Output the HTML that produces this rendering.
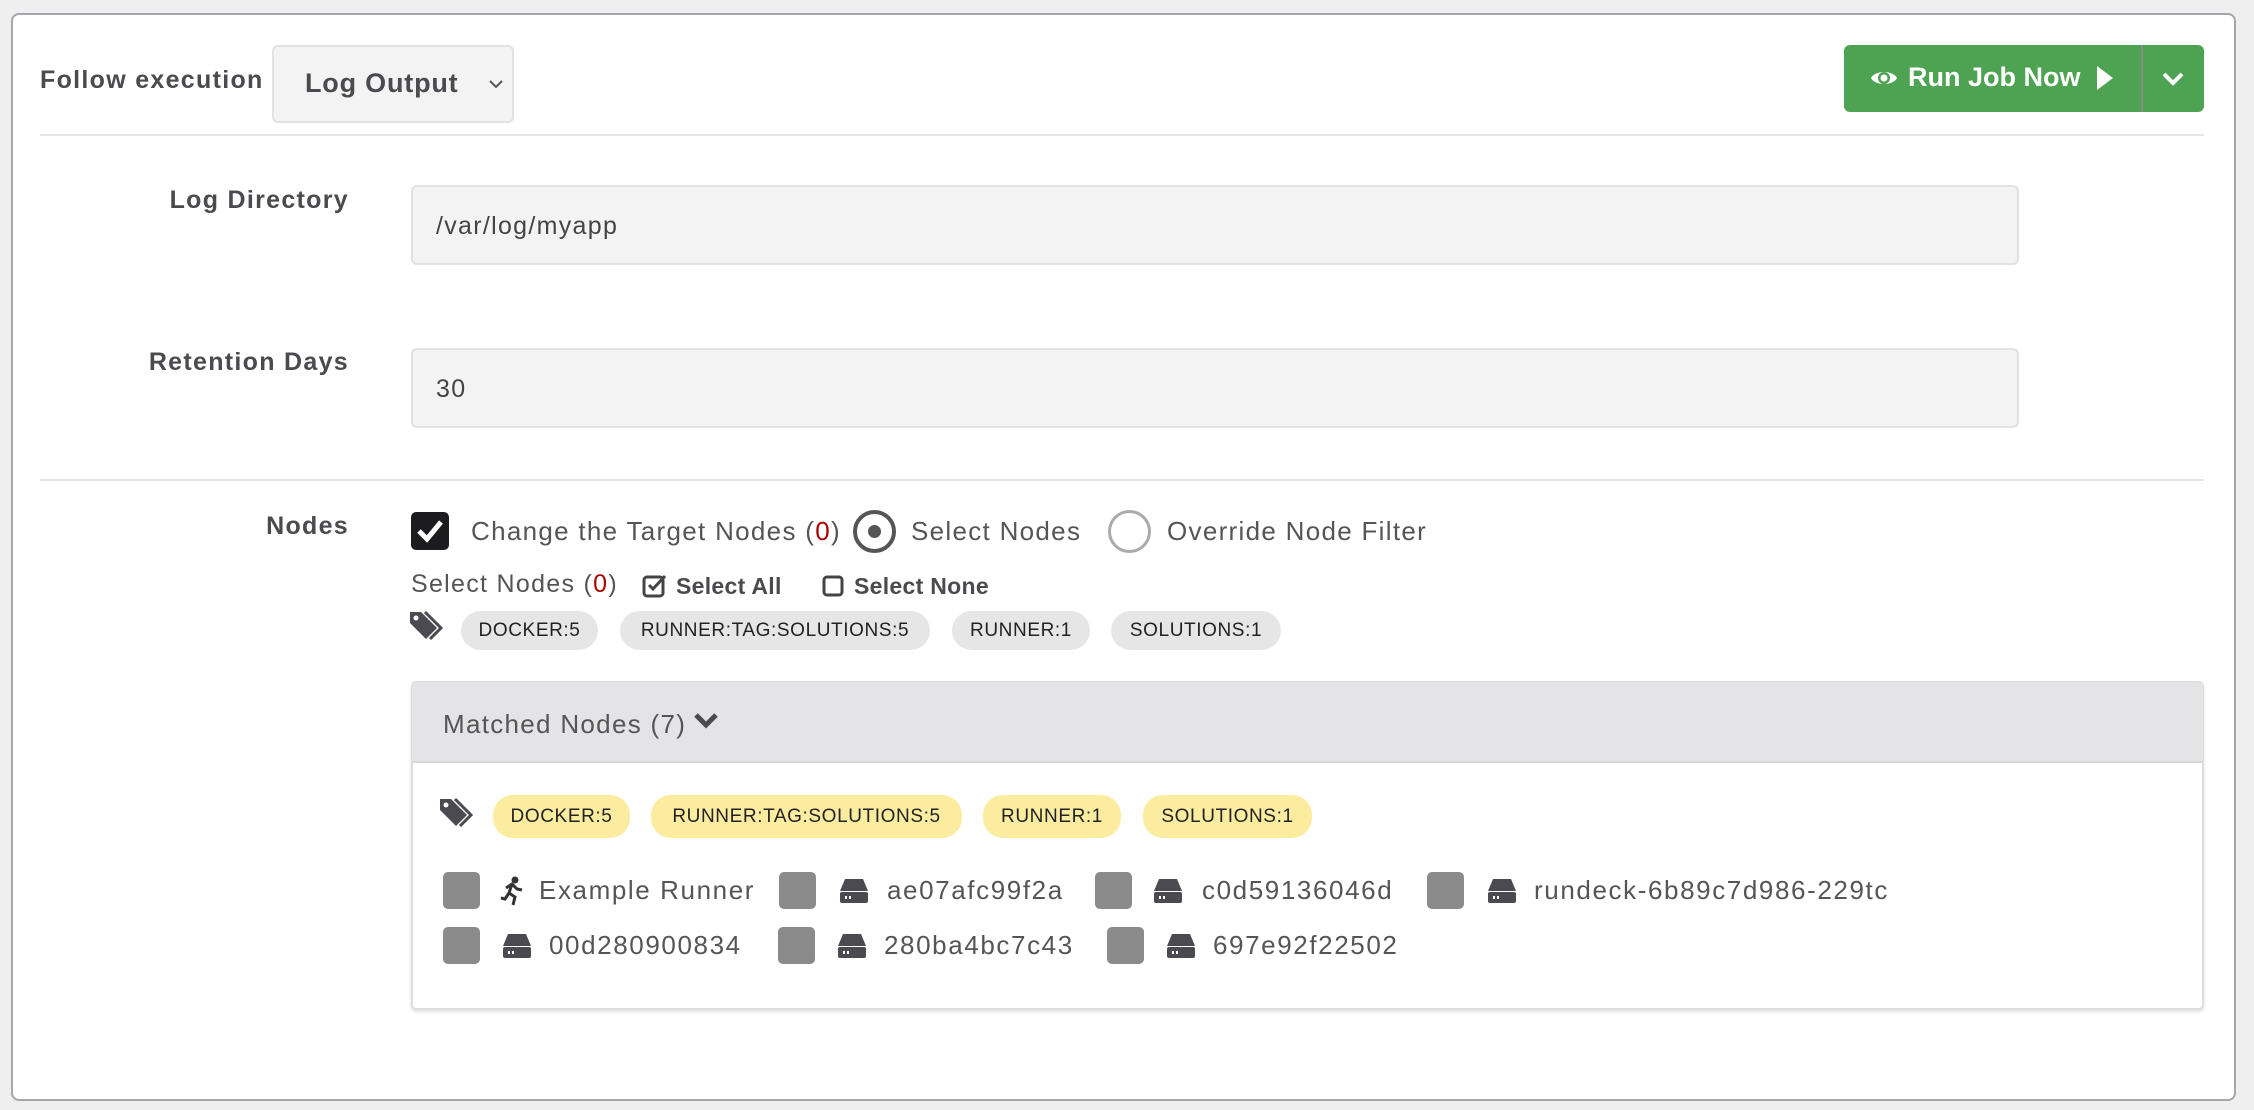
<!DOCTYPE html>
<html><head><meta charset="utf-8"><style>
*{box-sizing:border-box;margin:0;padding:0}
body{width:2254px;height:1110px;background:#efefef;font-family:"Liberation Sans",sans-serif;color:#555;position:relative;overflow:hidden;letter-spacing:1.3px}
.a{position:absolute;white-space:nowrap}
.card{position:absolute;left:11px;top:13px;width:2225px;height:1088px;background:#fff;border:2px solid #a5a5aa;border-radius:8px}
.lbl{font-weight:bold;color:#4a4a4f;font-size:25px}
.inp{position:absolute;background:#f3f3f3;border:2px solid #e2e2e2;border-radius:6px}
.hr{position:absolute;height:2px;background:#e6e6e6}
.pill{position:absolute;height:39px;border-radius:20px;background:#e6e6e6;color:#222;font-size:19px;line-height:39px;text-align:center;letter-spacing:0.6px}
.y{background:#fcec9f;height:43px;line-height:43px}
.sq{position:absolute;width:37px;height:37px;background:#8a8a8a;border-radius:5px}
.nt{position:absolute;font-size:26px;color:#555;white-space:nowrap;letter-spacing:1.6px}
</style></head><body>
<div class="card"></div>
<div class="a lbl" style="left:40px;top:66px">Follow execution</div>
<div class="inp" style="left:272px;top:45px;width:242px;height:78px;background:#f3f3f3"></div>
<div class="a" style="left:305px;top:68px;font-size:27px;font-weight:bold;color:#4a4a4f;letter-spacing:0.8px">Log Output</div>
<svg class="a" style="left:488px;top:78px" width="16" height="12" viewBox="0 0 16 12"><path d="M2 3l6 6 6-6" fill="none" stroke="#555" stroke-width="2"/></svg>

<div class="a" style="left:1844px;top:45px;width:360px;height:67px;background:#4ea352;border-radius:6px"></div>
<div class="a" style="left:2141px;top:45px;width:2px;height:67px;background:#8a8a8a"></div>
<svg class="a" style="left:1870px;top:67px" width="28" height="22" viewBox="0 0 28 22"><path d="M1 11C5 3 23 3 27 11C23 19 5 19 1 11Z" fill="#fff"/><circle cx="14" cy="11" r="6" fill="#4ea352"/><circle cx="14" cy="11" r="3.5" fill="#fff"/></svg>
<div class="a" style="left:1908px;top:62px;font-size:27px;color:#fff;font-weight:bold;letter-spacing:0">Run Job Now</div>
<svg class="a" style="left:2096px;top:65px" width="18" height="26"><path d="M1 1L17 13L1 25Z" fill="#fff"/></svg>
<svg class="a" style="left:2162px;top:72px" width="22" height="14"><path d="M2 2l9 9 9-9" fill="none" stroke="#fff" stroke-width="4"/></svg>

<div class="hr" style="left:40px;top:134px;width:2164px"></div>

<div class="a lbl" style="right:1905px;top:186px">Log Directory</div>
<div class="inp" style="left:411px;top:185px;width:1608px;height:80px"></div>
<div class="a" style="left:436px;top:212px;font-size:25px;color:#444">/var/log/myapp</div>

<div class="a lbl" style="right:1905px;top:348px">Retention Days</div>
<div class="inp" style="left:411px;top:348px;width:1608px;height:80px"></div>
<div class="a" style="left:436px;top:375px;font-size:25px;color:#444">30</div>

<div class="hr" style="left:40px;top:479px;width:2164px"></div>

<div class="a lbl" style="right:1905px;top:512px">Nodes</div>
<div class="a" style="left:411px;top:512px;width:38px;height:38px;background:#1c1c1e;border-radius:5px"></div>
<svg class="a" style="left:416px;top:518px" width="28" height="26"><path d="M3 13l8 8L25 4" fill="none" stroke="#fff" stroke-width="5"/></svg>
<div class="a" style="left:471px;top:516px;font-size:26px">Change the Target Nodes (<span style="color:#a00">0</span>)</div>
<div class="a" style="left:853px;top:510px;width:43px;height:43px;border:4px solid #555;border-radius:50%"></div>
<div class="a" style="left:868px;top:525px;width:13px;height:13px;background:#555;border-radius:50%"></div>
<div class="a" style="left:911px;top:516px;font-size:26px">Select Nodes</div>
<div class="a" style="left:1108px;top:510px;width:43px;height:43px;border:3px solid #aaa;border-radius:50%"></div>
<div class="a" style="left:1167px;top:516px;font-size:26px">Override Node Filter</div>

<div class="a" style="left:411px;top:570px;font-size:25px">Select Nodes (<span style="color:#a00">0</span>)</div>
<svg class="a" style="left:642px;top:573px" width="26" height="26"><rect x="2" y="4" width="19" height="19" rx="3" fill="none" stroke="#444" stroke-width="3"/><path d="M7 12l4 4 12-13" fill="none" stroke="#444" stroke-width="3"/></svg>
<div class="a" style="left:676px;top:573px;font-size:23px;font-weight:bold;color:#4a4a4f;letter-spacing:0.3px">Select All</div>
<svg class="a" style="left:822px;top:575px" width="22" height="22"><rect x="2" y="2" width="18" height="18" rx="3" fill="none" stroke="#444" stroke-width="3"/></svg>
<div class="a" style="left:854px;top:573px;font-size:23px;font-weight:bold;color:#4a4a4f;letter-spacing:0.3px">Select None</div>

<svg class="a" style="left:410px;top:610px" width="36" height="32" viewBox="0 0 36 32"><path d="M0 2V13L16 29L27 18L11 2Z" fill="#4a4a50"/><circle cx="6" cy="8" r="2.5" fill="#fff"/><path d="M15 2L31 18L20 29" fill="none" stroke="#4a4a50" stroke-width="3"/></svg>
<div class="pill" style="left:461px;top:611px;width:137px">DOCKER:5</div>
<div class="pill" style="left:620px;top:611px;width:310px">RUNNER:TAG:SOLUTIONS:5</div>
<div class="pill" style="left:952px;top:611px;width:138px">RUNNER:1</div>
<div class="pill" style="left:1111px;top:611px;width:170px">SOLUTIONS:1</div>

<div class="a" style="left:411px;top:681px;width:1793px;height:329px;border:2px solid #ddd;border-radius:5px;background:#fff;box-shadow:0 2px 3px rgba(0,0,0,.12)"></div>
<div class="a" style="left:412px;top:682px;width:1791px;height:81px;background:#e4e4e6;border-bottom:2px solid #d8d8d8"></div>
<div class="a" style="left:443px;top:709px;font-size:26px;color:#555">Matched Nodes (7)</div>
<svg class="a" style="left:694px;top:712px" width="24" height="18"><path d="M2 3l10 10 10-10" fill="none" stroke="#4a4a50" stroke-width="5"/></svg>

<svg class="a" style="left:440px;top:797px" width="36" height="32" viewBox="0 0 36 32"><path d="M0 2V13L16 29L27 18L11 2Z" fill="#4a4a50"/><circle cx="6" cy="8" r="2.5" fill="#fff"/><path d="M15 2L31 18L20 29" fill="none" stroke="#4a4a50" stroke-width="3"/></svg>
<div class="pill y" style="left:493px;top:795px;width:137px">DOCKER:5</div>
<div class="pill y" style="left:651px;top:795px;width:311px">RUNNER:TAG:SOLUTIONS:5</div>
<div class="pill y" style="left:983px;top:795px;width:138px">RUNNER:1</div>
<div class="pill y" style="left:1143px;top:795px;width:169px">SOLUTIONS:1</div>

<div class="sq" style="left:443px;top:872px"></div>
<svg class="a" style="left:500px;top:876px" width="24" height="30" viewBox="0 0 24 30"><circle cx="15" cy="4" r="3.5" fill="#333"/><path d="M6 12l6-4 5 5 5 1M12 8l-3 9 6 4-2 8M9 17l-4 6-4-1" fill="none" stroke="#333" stroke-width="3"/></svg>
<div class="nt" style="left:539px;top:875px">Example Runner</div>
<div class="sq" style="left:779px;top:872px"></div>
<div class="sq" style="left:1095px;top:872px"></div>
<div class="sq" style="left:1427px;top:872px"></div>
<div class="nt" style="left:887px;top:875px">ae07afc99f2a</div>
<div class="nt" style="left:1202px;top:875px">c0d59136046d</div>
<div class="nt" style="left:1534px;top:875px">rundeck-6b89c7d986-229tc</div>

<div class="sq" style="left:443px;top:927px"></div>
<div class="sq" style="left:778px;top:927px"></div>
<div class="sq" style="left:1107px;top:927px"></div>
<div class="nt" style="left:549px;top:930px">00d280900834</div>
<div class="nt" style="left:884px;top:930px">280ba4bc7c43</div>
<div class="nt" style="left:1213px;top:930px">697e92f22502</div>

<svg width="0" height="0" style="position:absolute"><defs><g id="hd"><path d="M5 0H23L28 12H0Z" fill="#4a4a50"/><rect x="0" y="13" width="28" height="11" rx="2" fill="#4a4a50"/><rect x="5" y="17" width="2" height="3" fill="#fff"/><rect x="9" y="17" width="2" height="3" fill="#fff"/></g></defs></svg>
<svg class="a" style="left:840px;top:879px" width="30" height="26"><use href="#hd"/></svg>
<svg class="a" style="left:1154px;top:879px" width="30" height="26"><use href="#hd"/></svg>
<svg class="a" style="left:1488px;top:879px" width="30" height="26"><use href="#hd"/></svg>
<svg class="a" style="left:503px;top:934px" width="30" height="26"><use href="#hd"/></svg>
<svg class="a" style="left:838px;top:934px" width="30" height="26"><use href="#hd"/></svg>
<svg class="a" style="left:1167px;top:934px" width="30" height="26"><use href="#hd"/></svg>
</body></html>
